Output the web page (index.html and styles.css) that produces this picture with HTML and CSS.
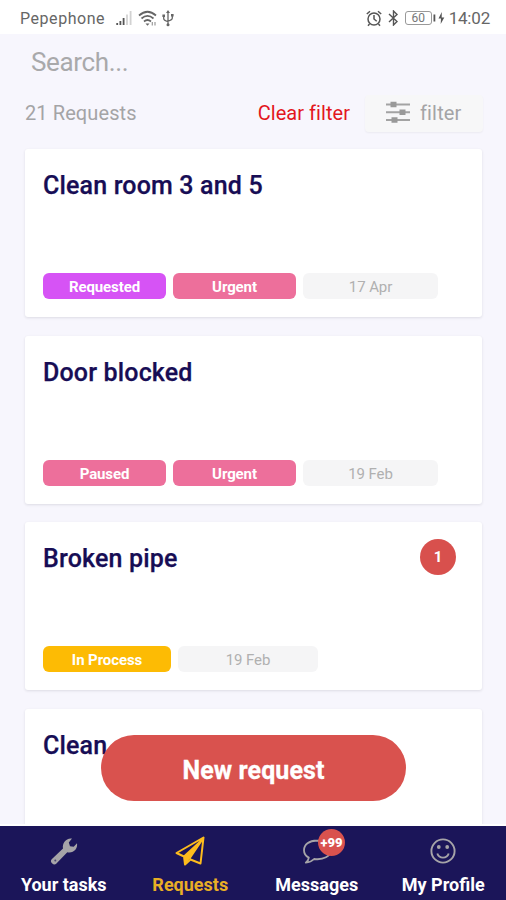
FILE: index.html
```html
<!DOCTYPE html>
<html lang="en">
<head>
<meta charset="utf-8">
<title>Requests</title>
<link rel="stylesheet" href="styles.css">
</head>
<body>
<div class="app">
  <header class="status">
    <span class="carrier">Pepephone</span>
    <svg class="signal" width="17" height="16" viewBox="0 0 17 16"><path d="M1.2 13v2M4.4 11v4M7.6 8v7" stroke="#555" stroke-width="1.8"/><path d="M11 4.500v10.500M14.600 1v14" stroke="#d2d2d2" stroke-width="1.800"/></svg>
    <svg class="wifi" width="20" height="17" viewBox="0 0 20 17" fill="none" stroke="#666" stroke-width="1.700"><path d="M1 5.500Q9.500-2 18 5.500M3.500 8.500Q9.500 3.300 15.500 8.500M6 11.500Q9.500 8.500 13 11.500"/><path d="M7.500 13.500h4l-2 2.300z" fill="#666" stroke="none"/><path d="M14.300 12v3.500M17 12v3.500" stroke="#999" stroke-width="1.200"/></svg>
    <svg class="usb" width="12" height="17" viewBox="0 0 12 17" fill="none" stroke="#666" stroke-width="1.300"><path d="M6 2v12M1.700 6v2.500Q1.700 10.500 6 11.500M10.300 5.500v2.500Q10.300 10 6 11"/><path d="M6 0l2 3H4zM.4 4.500H3v2.500H.4zM9 4h2.600v2.500H9z" fill="#666" stroke="none"/><circle cx="6" cy="14.700" r="1.500" fill="#666" stroke="none"/></svg>
    <span class="spacer"></span>
    <svg class="alarm" width="16" height="17" viewBox="0 0 16 17" fill="none" stroke="#555" stroke-width="1.500"><circle cx="8" cy="9" r="6"/><path d="M8 5v4l2.700 2.300M.8 4L4 1.200M12 1.200L15.200 4M3.500 14L2 15.700M12.500 14l1.500 1.700"/></svg>
    <svg class="bluetooth" width="11" height="16" viewBox="0 0 11 16" fill="none" stroke="#555" stroke-width="1.400"><path d="M1 4l8 7.500L5.500 15V1L9 4.500 1 12"/></svg>
    <span class="battery">60</span>
    <svg class="bolt" width="12" height="12" viewBox="0 0 12 12" fill="#555"><path d="M.5 2.500H2.300v7H.5zM8.800 0L5.500 6.500H8L7.700 12 11.300 5.400H8.700z"/></svg>
    <span class="clock">14:02</span>
  </header>

  <main class="page">
    <input class="search" type="text" placeholder="Search...">
    <div class="toolbar">
      <span class="count">21 Requests</span>
      <span class="clear">Clear filter</span>
      <span class="filter">
        <svg width="24" height="24" viewBox="0 0 24 24"><path d="M0 3.500h24M0 11.300h24M0 19h24" stroke="#a3a3a3" stroke-width="1.900"/><path d="M4.500 .8h6v5.400h-6zM13.500 8.600h6v5.400h-6zM5.500 16.300h6v5.400h-6z" fill="#999"/></svg>
        <span>filter</span>
      </span>
    </div>
    <section class="list">
      <article class="card">
        <h2>Clean room 3 and 5</h2>
        <div class="tags"><span class="tag purple">Requested</span><span class="tag pink">Urgent</span><span class="tag date">17 Apr</span></div>
      </article>
      <article class="card">
        <h2>Door blocked</h2>
        <div class="tags"><span class="tag pink">Paused</span><span class="tag pink">Urgent</span><span class="tag date">19 Feb</span></div>
      </article>
      <article class="card">
        <h2>Broken pipe</h2>
        <span class="unread">1</span>
        <div class="tags wide"><span class="tag amber">In Process</span><span class="tag date">19 Feb</span></div>
      </article>
      <article class="card">
        <h2>Clean</h2>
      </article>
    </section>
  </main>

  <button class="new">New request</button>

  <nav class="nav">
    <a class="item">
      <svg width="28" height="28" viewBox="0 0 28 28"><path d="M1.700 22.200L13 11.500C12 6.500 16 .7 22 1.600L18.800 5.400 20 9.200 23.700 9.700 27 6.200C28 11.700 23.500 16.500 17.300 15.200L6.200 26.800C5 28 3.500 27.800 2 26.300 .6 25 .5 23.500 1.700 22.200Z" fill="#a6a4a8"/><circle cx="5.300" cy="23.400" r="1" fill="#4a4670"/></svg>
      <span>Your tasks</span>
    </a>
    <a class="item active">
      <svg width="30" height="30" viewBox="0 0 30 30" fill="none" stroke="#fdbc1d" stroke-width="2" stroke-linejoin="round"><path d="M1.500 17L28.500 1.500 25.500 27.500 15.500 23.500 10 28.500 9 20.500ZM9 20.500L27 4 14.500 22.500"/><path d="M9 20.500L24 6.500 15 22.500 10 28.500Z" fill="#fdbc1d" stroke="none"/></svg>
      <span>Requests</span>
    </a>
    <a class="item">
      <svg width="30" height="28" viewBox="0 0 30 28" fill="none" stroke="#a6a4a8" stroke-width="1.800" stroke-linejoin="round"><path d="M15 3.500C7 3.500 2 7.500 2 13.200c0 3.200 1.500 5.700 4.800 7.400-.2 2-1.300 3.600-3 5.100 3.500-.2 6.200-1.500 8.300-3.700 9.400 1.200 16.700-2.800 16.700-8.800 0-5.700-6-9.700-13.800-9.700z"/></svg>
      <b class="badge">+99</b>
      <span>Messages</span>
    </a>
    <a class="item">
      <svg width="26" height="26" viewBox="0 0 26 26" fill="none" stroke="#a6a4a8" stroke-width="1.900"><circle cx="13" cy="13" r="11.600"/><path d="M7.300 15.500c1.800 5.500 9.600 5.500 11.400 0"/><g fill="#a6a4a8" stroke="none"><circle cx="8.800" cy="9" r="1.900"/><circle cx="17.200" cy="9" r="1.900"/></g></svg>
      <span>My Profile</span>
    </a>
  </nav>
</div>
</body>
</html>
```

FILE: styles.css
```css
* { box-sizing: border-box; }
body { margin: 0; font-family: Roboto, sans-serif; }
.app { position: relative; display: flex; flex-direction: column; width: 506px; height: 900px; overflow: hidden; background: #f7f6fd; }

.status { display: flex; align-items: center; flex: none; height: 34px; padding: 2px 16px 0 20px; background: #fff; color: #666; font-size: 16px; }
.carrier { width: 96px; letter-spacing: .55px; }
.wifi { margin-left: 5px; }
.usb { margin-left: 4px; }
.spacer { flex: 1; }
.alarm { margin-right: 1px; }
.bluetooth { margin-left: 5px; }
.battery { display: flex; align-items: center; justify-content: center; width: 27px; height: 14px; margin-left: 6px; border: 1px solid #999; border-radius: 3px; font-size: 12px; color: #777; }
.bolt { margin-left: 1px; }
.clock { margin-left: 4px; font-size: 17px; letter-spacing: -.2px; }

.page { display: flex; flex-direction: column; flex: 1; min-height: 0; overflow: hidden; padding: 0 24px 0 25px; border-bottom: 2px solid #fff; }
.search { height: 56px; flex: none; padding: 0 6px; border: 0; outline: 0; background: transparent; font: 26px Roboto, sans-serif; letter-spacing: -.35px; }
.search::placeholder { color: #a9a9ab; opacity: 1; }
.toolbar { display: flex; align-items: center; flex: none; height: 38px; margin-top: 4px; margin-right: -1px; font-size: 20px; color: #a4a4a6; }
.count { flex: 1; letter-spacing: .1px; }
.clear { margin-right: 15px; color: #e3161d; letter-spacing: .05px; }
.filter { display: flex; align-items: center; gap: 10px; width: 118px; height: 37px; padding-left: 21px; border-radius: 4px; background: #f7f7f8; box-shadow: 0 1px 2px #0000000d; letter-spacing: .15px; }

.list { display: flex; flex-direction: column; gap: 18.600px; margin-top: 17px; }
.card { position: relative; display: flex; flex-direction: column; justify-content: space-between; flex: none; height: 168px; padding: 21px 18px 18px; border-radius: 3px; background: #fff; box-shadow: 0 1px 3px #0000181c; }
h2 { margin: 0; font-size: 25px; line-height: 32px; font-weight: 500; letter-spacing: .16px; color: #170d55; -webkit-text-stroke: .25px #170d55; }
.tags { display: flex; gap: 7px; }
.tag { width: 123px; height: 26px; border-radius: 6px; font-size: 15px; line-height: 28px; font-weight: 700; letter-spacing: -.1px; text-align: center; color: #fff; }
.purple { background: #d653f5; }
.pink { background: #ed6f9b; }
.amber { background: #fdbb04; }
.tag.date { width: 135px; background: #f5f5f6; color: #b0b0b0; font-weight: 400; }
.wide .amber { width: 128px; }
.wide .date { width: 140px; }
.unread { position: absolute; top: 17px; right: 26px; width: 36px; height: 36px; border-radius: 50%; background: #d8504d; color: #fff; font-size: 15px; line-height: 37px; font-weight: 700; text-align: center; }

.new { position: absolute; left: 101px; top: 735px; width: 305px; height: 66px; padding: 5px 0 0; border: 0; border-radius: 33px; background: #d9524e; color: #fff; font: 700 25px Roboto, sans-serif; letter-spacing: .1px; -webkit-text-stroke: .3px #fff; }

.nav { display: grid; grid-template-columns: repeat(4, 1fr); flex: none; height: 74px; background: #1b1559; color: #fff; }
.item { position: relative; display: flex; flex-direction: column; align-items: center; justify-content: space-between; padding: 10px 0 4px 1px; font-size: 18px; line-height: 22px; font-weight: 700; }
.item > svg { height: 30px; }
.active { color: #e9ae25; }
.badge { position: absolute; left: 65px; top: 3px; width: 27px; height: 27px; border-radius: 50%; background: #d9524e; font-size: 13px; line-height: 27px; text-align: center; }
```
